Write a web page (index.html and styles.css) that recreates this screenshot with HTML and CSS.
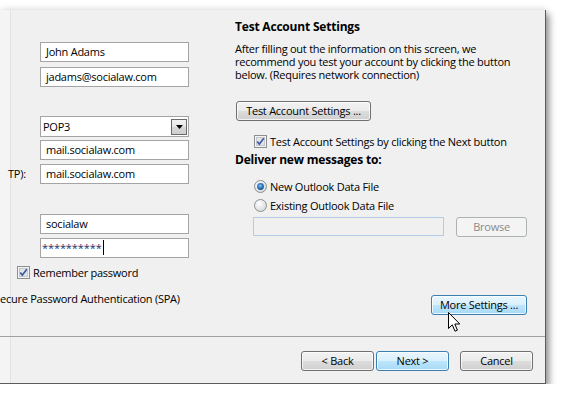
FILE: index.html
```html
<!DOCTYPE html>
<html>
<head>
<meta charset="utf-8">
<link rel="stylesheet" href="styles.css">
</head>
<body>
<div class="window">
  <div class="main">
    <div class="left">
      <div class="tb tb-name">John Adams</div>
      <div class="tb tb-mail">jadams@socialaw.com</div>
      <div class="select">
        <span class="select-text">POP3</span>
        <span class="select-btn"><svg width="7" height="4" viewBox="0 0 7 4"><path d="M0 0H7L3.5 4Z" fill="#000"/></svg></span>
      </div>
      <div class="tb tb-in">mail.socialaw.com</div>
      <div class="row-label">
        <span class="cut-label">TP):</span>
        <div class="tb tb-out">mail.socialaw.com</div>
      </div>
      <div class="tb tb-user">socialaw</div>
      <div class="tb tb-pass"><span class="caret">**********</span></div>
      <div class="check-row remember">
        <svg class="cb" width="13" height="13" viewBox="0 0 13 13"><rect x="0.5" y="0.5" width="12" height="12" fill="#f4f4f4" stroke="#8e8f8f"/><rect x="2.5" y="2.5" width="8" height="8" fill="#e2e4e8" stroke="#c4c7cc"/><path d="M3.3 6.6 L5.3 9.2 L9.8 3.2" fill="none" stroke="#3b5a9e" stroke-width="1.7"/></svg>
        <span>Remember password</span>
      </div>
      <div class="spa">ecure Password Authentication (SPA)</div>
    </div>
    <div class="right">
      <div class="title">Test Account Settings</div>
      <p class="para">After filling out the information on this screen, we<br>recommend you test your account by clicking the button<br>below. (Requires network connection)</p>
      <div class="btn btn-test">Test Account Settings ...</div>
      <div class="check-row test-check">
        <svg class="cb" width="13" height="13" viewBox="0 0 13 13"><rect x="0.5" y="0.5" width="12" height="12" fill="#f4f4f4" stroke="#8e8f8f"/><rect x="2.5" y="2.5" width="8" height="8" fill="#e2e4e8" stroke="#c4c7cc"/><path d="M3.3 6.6 L5.3 9.2 L9.8 3.2" fill="none" stroke="#3b5a9e" stroke-width="1.7"/></svg>
        <span>Test Account Settings by clicking the Next button</span>
      </div>
      <div class="title deliver">Deliver new messages to:</div>
      <div class="radio-row first">
        <svg class="rb" width="13" height="13" viewBox="0 0 13 13"><defs><radialGradient id="rg1" cx="0.4" cy="0.35" r="0.7"><stop offset="0" stop-color="#ffffff"/><stop offset="1" stop-color="#d4d6d9"/></radialGradient><radialGradient id="dot" cx="0.45" cy="0.4" r="0.6"><stop offset="0" stop-color="#8cc8f2"/><stop offset="0.6" stop-color="#2b77c0"/><stop offset="1" stop-color="#134b85"/></radialGradient></defs><circle cx="6.5" cy="6.5" r="6" fill="url(#rg1)" stroke="#8e8f8f"/><circle cx="6.5" cy="6.5" r="3.4" fill="url(#dot)"/></svg>
        <span>New Outlook Data File</span>
      </div>
      <div class="radio-row">
        <svg class="rb" width="13" height="13" viewBox="0 0 13 13"><defs><radialGradient id="rg2" cx="0.4" cy="0.35" r="0.7"><stop offset="0" stop-color="#ffffff"/><stop offset="1" stop-color="#d4d6d9"/></radialGradient></defs><circle cx="6.5" cy="6.5" r="6" fill="url(#rg2)" stroke="#8e8f8f"/></svg>
        <span>Existing Outlook Data File</span>
      </div>
      <div class="file-row">
        <div class="tb-disabled"></div>
        <div class="btn btn-disabled btn-browse">Browse</div>
      </div>
      <div class="btn btn-blue btn-more">More Settings ...</div>
    </div>
  </div>
  <div class="footer">
    <div class="btn btn-back">&lt; Back</div>
    <div class="btn btn-blue btn-next">Next &gt;</div>
    <div class="btn btn-cancel">Cancel</div>
  </div>
  <svg class="cursor" width="13" height="21" viewBox="0 0 13 21"><path d="M0.5 0.5 L0.5 16.5 L4.3 12.8 L7 19.2 L9.4 18.2 L6.8 12 L11.8 12 Z" fill="#fff" stroke="#000" stroke-width="1" stroke-linejoin="miter"/></svg>
</div>
</body>
</html>
```
FILE: styles.css
```css
html, body {
  margin: 0;
  padding: 0;
  background: #ffffff;
}
body {
  font-family: "Open Sans", "Noto Sans", sans-serif;
  font-size: 11px;
  letter-spacing: -0.25px;
  color: #000;
}
.window {
  position: relative;
  margin-top: 10px;
  width: 545px;
  height: 373px;
  background: linear-gradient(to right, #f4f4f4 0, #f4f4f4 10px, #e2e2e2 10px, #e2e2e2 11px, #f0f0f0 11px);
  border-right: 1px solid #5c5c5c;
  border-bottom: 1px solid #5c5c5c;
  box-shadow: 3px 4px 7px rgba(0, 0, 0, 0.45), 0 -3px 6px rgba(0, 0, 0, 0.06);
  display: flex;
  flex-direction: column;
}
.main {
  height: 326px;
  display: flex;
  flex: none;
}
.left {
  width: 235px;
  flex: none;
}
.right {
  flex: 1;
}
.tb {
  box-sizing: border-box;
  margin-left: 40px;
  width: 149px;
  height: 20px;
  border: 1px solid #a4a4a4;
  background: #fff;
  padding-left: 5px;
  line-height: 18px;
  white-space: nowrap;
}
.tb-name { margin-top: 32px; }
.tb-mail { margin-top: 5px; }
.select {
  box-sizing: border-box;
  margin: 29px 0 0 40px;
  width: 149px;
  height: 21px;
  border: 1px solid #a4a4a4;
  background: #fff;
  display: flex;
  align-items: center;
  justify-content: space-between;
  padding: 0 1px 0 2px;
}
.select-text { line-height: 19px; }
.select-btn {
  box-sizing: border-box;
  width: 16px;
  height: 16px;
  border: 1px solid #6a6a6a;
  background: linear-gradient(#f2f2f2, #e6e6e6 50%, #d6d6d6 50%, #cfcfcf);
  display: flex;
  align-items: center;
  justify-content: center;
}
.tb-in { margin-top: 3px; }
.row-label {
  display: flex;
  align-items: center;
  margin-top: 4px;
}
.cut-label {
  width: 40px;
  box-sizing: border-box;
  padding-left: 8px;
  padding-bottom: 1px;
}
.row-label .tb { margin-left: 0; }
.tb-user { margin-top: 30px; }
.tb-pass { margin-top: 4px; padding-left: 1px; }
.caret {
  color: #1a2f6b;
  letter-spacing: -0.1px;
  border-right: 1px solid #000;
  padding-right: 1px;
}
.check-row {
  display: flex;
  align-items: center;
  height: 16px;
}
.check-row .cb { margin-right: 3px; flex: none; }
.remember {
  margin: 6px 0 0 17px;
}
.spa {
  margin-top: 11px;
  line-height: 16px;
  white-space: nowrap;
}
.title {
  font-weight: bold;
  font-size: 12px;
  letter-spacing: -0.2px;
  line-height: 15px;
  padding-top: 9px;
}
.para {
  margin: 8px 0 0;
  line-height: 13px;
  white-space: nowrap;
}
.btn {
  box-sizing: border-box;
  height: 20px;
  border: 1px solid #707070;
  border-radius: 3px;
  background: linear-gradient(#f2f2f2 0%, #ebebeb 50%, #dddddd 50%, #cfcfcf 100%);
  box-shadow: inset 0 0 0 1px rgba(255, 255, 255, 0.75);
  text-align: center;
  line-height: 18px;
  white-space: nowrap;
}
.btn-blue {
  border-color: #3c7fb1;
  background: linear-gradient(#eaf6fd 0%, #d9f0fc 50%, #bee6fd 50%, #a7d9f5 100%);
}
.btn-disabled {
  border-color: #adb2b5;
  background: #f4f4f4;
  color: #8a8a8a;
  box-shadow: none;
}
.btn-test {
  margin: 20px 0 0 1px;
  width: 135px;
}
.test-check {
  margin: 12px 0 0 19px;
}
.deliver {
  padding-top: 0;
  margin-top: 3px;
}
.radio-row {
  display: flex;
  align-items: center;
  height: 19px;
  margin-left: 19px;
}
.radio-row.first { margin-top: 10px; }
.radio-row .rb { margin-right: 3px; flex: none; }
.file-row {
  display: flex;
  align-items: flex-start;
  margin-top: 2px;
}
.tb-disabled {
  box-sizing: border-box;
  margin-left: 18px;
  width: 191px;
  height: 19px;
  border: 1px solid #b3cbe4;
  background: #f0f0f0;
}
.btn-browse {
  margin-left: 12px;
  width: 71px;
}
.btn-more {
  margin: 58px 0 0 196px;
  width: 96px;
}
.footer {
  flex: none;
  height: 46px;
  border-top: 1px solid #a0a0a0;
  display: flex;
  justify-content: flex-end;
  align-items: flex-start;
  padding: 14px 12px 0 0;
  box-sizing: content-box;
}
.footer .btn { width: 73px; }
.btn-next { margin-left: 2px; }
.btn-cancel { margin-left: 11px; }
.cursor {
  position: absolute;
  left: 448px;
  top: 302px;
}
```
